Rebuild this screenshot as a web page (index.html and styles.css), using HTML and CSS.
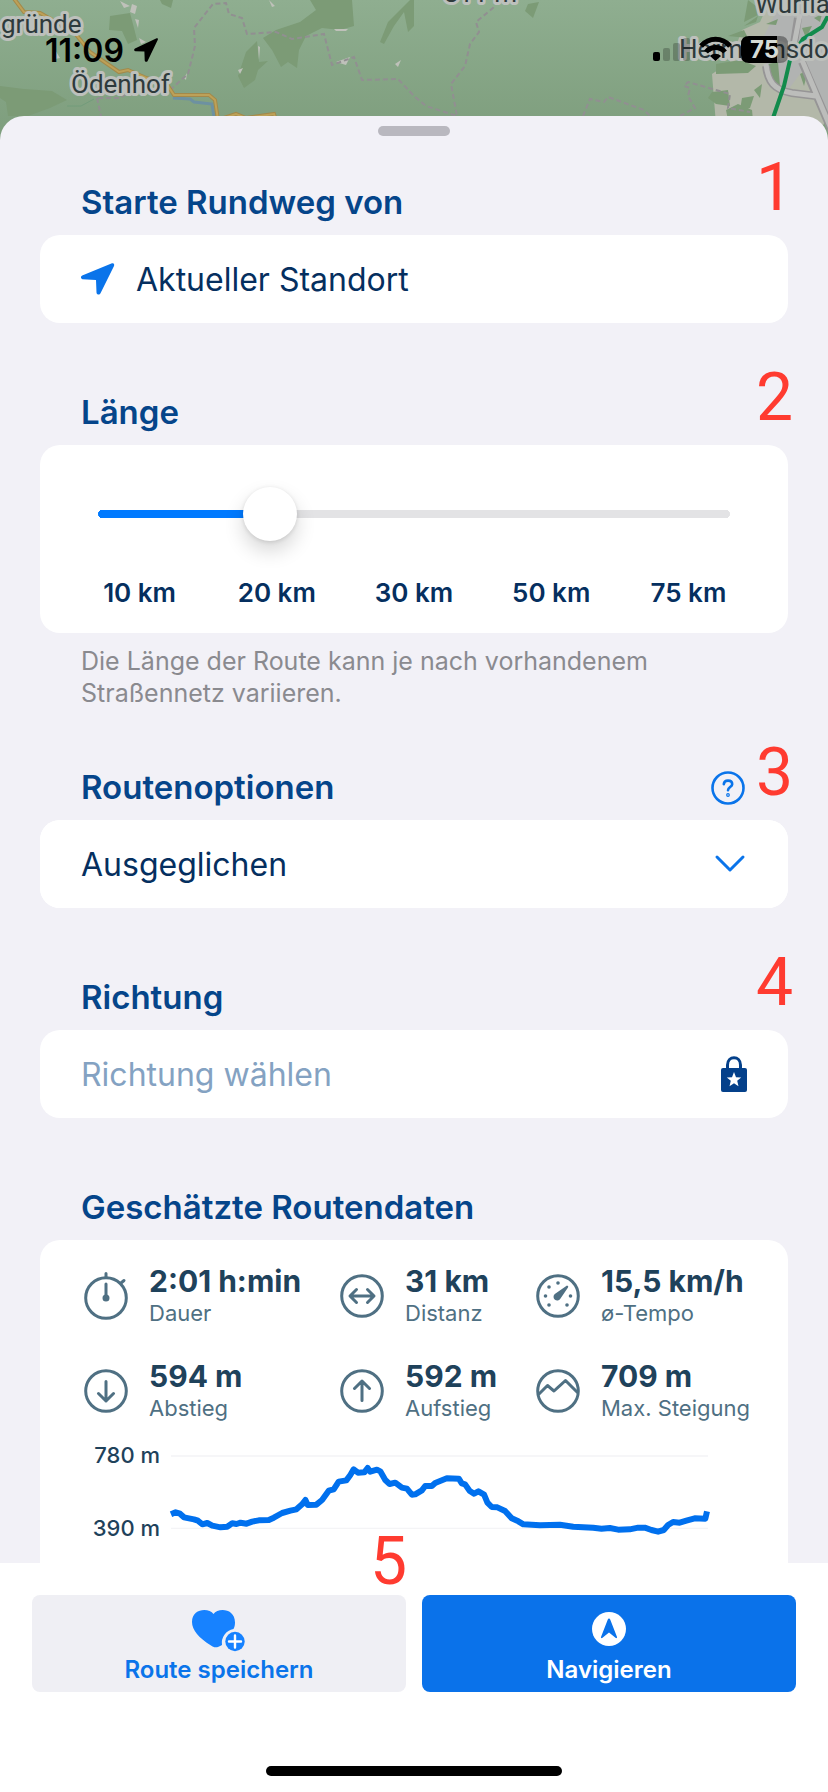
FILE: index.html
```html
<!DOCTYPE html>
<html lang="de">
<head>
<meta charset="utf-8">
<meta name="viewport" content="width=device-width, initial-scale=1">
<title>Rundweg planen</title>
<link rel="stylesheet" href="styles.css">
</head>
<body>
<div class="screen">
  <header class="top">
    <svg class="map" viewBox="0 0 828 150" preserveAspectRatio="xMidYMin slice" aria-hidden="true">
      <defs>
        <linearGradient id="land" x1="0" y1="0" x2="0" y2="1">
          <stop offset="0" stop-color="#8fae90"/>
          <stop offset="1" stop-color="#7c9c7b"/>
        </linearGradient>
      </defs>
      <rect width="828" height="150" fill="url(#land)"/>
      <g fill="#7c9b76">
        <path d="M0 86 24 89 52 91 67 100 50 108 28 116H8L6 102 0 98Z"/>
        <path d="M110 16 130 13 134 28 137 40 128 44 122 31 109 30Z"/>
        <path d="M160 0H173L171 8 162 4Z"/>
        <path d="M310 0H352L354 26 340 30 322 28 306 36 299 50 297 68 288 62 281 67 272 50 263 38 276 30 300 22 316 10Z"/>
        <path d="M246 52 257 41 259 62 268 61 258 70 255 80 244 88 238 76Z"/>
        <path d="M410 0 388 22 380 42 384 44 394 26 404 12 408 32 414 26V0Z"/>
        <path d="M528 4 539 2 533 18 525 11Z"/>
      </g>
      <g fill="#bfc1ba">
        <path d="M120 1 130 6 124 8ZM132 4 137 6 135 14 130 12ZM135 19 139 20 138 28ZM139 38 146 42 141 44ZM269 0 275 6 272 7ZM334 29H348L346 31 336 31ZM336 62 350 57 346 65ZM395 64 401 60 398 67ZM258 46 260 47 259 60ZM184 78 187 73 186 80ZM238 70 243 68 240 74ZM54 48 60 58 55 59Z"/>
      </g>
      <path d="M770 0H828V116L810 150H718L712 74 730 62 742 30 760 22Z" fill="#b3b8a9"/>
      <path d="M780 4 828 0V116L806 66 788 90 768 74 762 40Z" fill="#b1b3b2"/>
      <g fill="#7c9b76">
        <path d="M716 64 740 60 756 66 748 73 716 74ZM712 92 728 90 730 106 716 104 708 98ZM742 98 754 96 750 108 740 110ZM754 90 762 84 760 98ZM744 26 758 16 756 22ZM766 24 778 19 776 25ZM748 0 764 12 744 22ZM768 64 778 62 780 86 770 78ZM800 74 808 70 804 86ZM728 36 744 30 748 38ZM814 18 822 14 820 22ZM802 28 812 26 806 38ZM726 110 738 104 752 110 754 130 730 130Z"/>
      </g>
      <g fill="none" stroke="#969596" stroke-width="8">
        <path d="M798 18 793 50M766 66C768 82 774 90 792 93L816 96M802 62 840 150"/>
      </g>
      <g fill="none" stroke="#bcbdbb" stroke-width="5">
        <path d="M800 14 793 50M766 64C768 82 774 90 792 93L816 96M802 60 840 150"/>
      </g>
      <path d="M828 16 822 27 803 39 790 60 784 86 773 118" fill="none" stroke="#128b4c" stroke-width="4"/>
      <g fill="none" stroke="#918f91" stroke-width="2" stroke-dasharray="5 3">
        <path d="M170 90 188 74 195 46 194 28 213 4 226 3 229 14 242 18 247 34 276 32 292 39 324 34 332 65 354 57 362 80 398 79 414 96 426 106 457 116 451 84 465 66 470 44 479 32 476 22 493 8 496 0"/>
        <path d="M583 116 590 99 604 102 608 97 644 110 650 116M680 116 695 108 688 96 690 88 684 86 688 82 730 94 728 108 750 112M97 98 101 116M98 98 120 98 126 94"/>
      </g>
      <path d="M67 106 81 106 94 99" fill="none" stroke="#739c7b" stroke-width="1"/>
      <path d="M173 98 190 99 194 102 212 104 215 124" fill="none" stroke="#6d91a1" stroke-width="3"/>
      <path d="M12 -4 24 12 40 13 74 32 90 52 119 72 128 70 144 77 168 86 174 95 209 95 215 100 218 120 236 114 246 118 274 114 276 120" fill="none" stroke="#a3894a" stroke-width="4"/>
      <path d="M12 -4 24 12 40 13 74 32 90 52 119 72 128 70 144 77 168 86 174 95 209 95 215 100 218 120 236 114 246 118 274 114 276 120" fill="none" stroke="#bda158" stroke-width="2"/>
      <g class="map-label">
        <text x="1" y="33">gründe</text>
        <text x="71" y="93">Ödenhof</text>
        <text x="444" y="2">811 m</text>
        <text x="755" y="13">Würflach</text>
        <text x="679" y="58">Hermannsdorf</text>
      </g>
    </svg>
    <div class="status">
      <span class="clock">11:09</span>
      <svg class="status-arrow" viewBox="0 0 24 24" aria-label="Ortung aktiv"><path d="M22.600.3 1 10.500C-.4 11.200 0 13.200 1.600 13.300L10.400 13.500 10.700 22.300C10.800 24 13 24.400 13.600 23L23.800 1.700C24.200.7 23.600-.1 22.600.3Z"/></svg>
      <svg class="status-icons" viewBox="0 0 136 28" role="img" aria-label="Mobilfunk, WLAN, Akku 75 Prozent">
        <rect y="16" width="7" height="9" rx="2"/>
        <g opacity=".22"><rect x="10" y="12" width="7" height="13" rx="2"/><rect x="20" y="7" width="7" height="18" rx="2"/><rect x="30" y="2" width="7" height="23" rx="2"/></g>
        <g fill="none" stroke="#000" stroke-width="5"><path d="M48 10C56 1 69 1 77 10M53 16C58 10 67 10 72 16"/></g>
        <path d="M57 20C60 17 65 17 68 20L62.500 25Z"/>
        <path d="M96 0H124V27H96Q88 27 88 19V8Q88 0 96 0Z"/>
        <path d="M124 0H127Q135 0 135 8V19Q135 27 127 27H124Z" opacity=".35"/>
        <text class="battery" x="97" y="22">75</text>
      </svg>
    </div>
  </header>

  <main class="sheet">
    <div class="handle"></div>

    <section class="section">
      <h2 class="title">Starte Rundweg von</h2>
      <span class="mark">1</span>
      <button class="card row" type="button">
        <svg class="locate" viewBox="0 0 34 32" aria-hidden="true"><path d="M31 .3 1.200 12.600C-.6 13.400-.3 16 1.600 16.200L15 17 15.500 29.500C15.600 31.900 18.600 32.400 19.500 30.300L33 3C33.700 1.200 32.600-.3 31 .3Z" fill="#0a74ea"/></svg>
        <span>Aktueller Standort</span>
      </button>
    </section>

    <section class="section">
      <h2 class="title"><label for="length">Länge</label></h2>
      <span class="mark">2</span>
      <div class="card range-card">
        <input class="range" id="length" type="range" min="0" max="4" step="1" value="1">
        <div class="ticks">
          <span>10 km</span><span>20 km</span><span>30 km</span><span>50 km</span><span>75 km</span>
        </div>
      </div>
      <p class="note">Die Länge der Route kann je nach vorhandenem Straßennetz variieren.</p>
    </section>

    <section class="section">
      <div class="title-line">
        <h2 class="title"><label for="options">Routenoptionen</label></h2>
        <button class="help" type="button" aria-label="Hilfe">
          <svg viewBox="0 0 34 34" aria-hidden="true" fill="none" stroke="#0a74ea" stroke-width="2.600" stroke-linecap="round"><circle cx="17" cy="17" r="15.500"/><path d="M12.800 13.200C13 10.700 14.700 9.600 17 9.600 19.400 9.600 21.200 11 21.200 13.200 21.200 16 17 16.200 17 19.300"/><circle cx="17" cy="24" r=".6"/></svg>
        </button>
      </div>
      <span class="mark">3</span>
      <div class="card picker">
        <select class="select" id="options"><option>Ausgeglichen</option></select>
        <svg class="chevron" viewBox="0 0 30 18" aria-hidden="true"><path d="M2 2 15 15 28 2" fill="none" stroke="#0a74ea" stroke-width="3" stroke-linecap="round" stroke-linejoin="round"/></svg>
      </div>
    </section>

    <section class="section">
      <h2 class="title">Richtung</h2>
      <span class="mark">4</span>
      <button class="card row locked" type="button">
        <span>Richtung wählen</span>
        <svg class="lock" viewBox="0 0 26 36" aria-hidden="true"><path d="M6.500 14V9C6.500-.7 19.500-.7 19.500 9V14" fill="none" stroke="#04408a" stroke-width="3"/><rect y="12" width="26" height="24" rx="2" fill="#04408a"/><path d="M13 16 15 21.200 20.200 21.500 16.200 24.800 17.500 30.200 13 27.200 8.500 30.200 9.800 24.800 5.800 21.500 11 21.200Z" fill="#fff"/></svg>
      </button>
    </section>

    <section class="section">
      <h2 class="title">Geschätzte Routendaten</h2>
      <div class="card data">
        <dl class="stats">
          <div class="stat">
            <svg viewBox="0 0 44 48" class="stat-icon tall" aria-hidden="true"><circle cx="22" cy="26" r="20.300"/><path d="M22 5V1.500M37 11 40 8.500M22 12V26"/><circle cx="22" cy="26" r="2" fill="#4f7083"/></svg>
            <div><dd>2:01 h:min</dd><dt>Dauer</dt></div>
          </div>
          <div class="stat">
            <svg viewBox="0 0 44 44" class="stat-icon" aria-hidden="true"><circle cx="22" cy="22" r="20.300"/><path d="M10.500 22H33.500M16.500 15.500 10 22 16.500 28.500M27.500 15.500 34 22 27.500 28.500"/></svg>
            <div><dd>31 km</dd><dt>Distanz</dt></div>
          </div>
          <div class="stat">
            <svg viewBox="0 0 44 44" class="stat-icon" aria-hidden="true"><circle cx="22" cy="22" r="20.300"/><g fill="#4f7083" stroke="none"><circle cx="22" cy="9" r="1.800"/><circle cx="13" cy="13" r="1.800"/><circle cx="9.500" cy="22" r="1.800"/><circle cx="13" cy="31" r="1.800"/><circle cx="31" cy="31" r="1.800"/><circle cx="34.500" cy="22" r="1.800"/><path d="M31 11.500Q33 12 32 13.500L24.500 24.500A3.700 3.700 0 1 1 18.800 20Z"/></g></svg>
            <div><dd>15,5 km/h</dd><dt>ø-Tempo</dt></div>
          </div>
          <div class="stat">
            <svg viewBox="0 0 44 44" class="stat-icon" aria-hidden="true"><circle cx="22" cy="22" r="20.300"/><path d="M22 12.500V32M14.500 24.500 22 32 29.500 24.500"/></svg>
            <div><dd>594 m</dd><dt>Abstieg</dt></div>
          </div>
          <div class="stat">
            <svg viewBox="0 0 44 44" class="stat-icon" aria-hidden="true"><circle cx="22" cy="22" r="20.300"/><path d="M22 31.500V12M14.500 19.500 22 12 29.500 19.500"/></svg>
            <div><dd>592 m</dd><dt>Aufstieg</dt></div>
          </div>
          <div class="stat">
            <svg viewBox="0 0 44 44" class="stat-icon" aria-hidden="true"><circle cx="22" cy="22" r="20.300"/><path d="M3 25 11.500 16.500 18 22 29.500 11.500 41 23"/></svg>
            <div><dd>709 m</dd><dt>Max. Steigung</dt></div>
          </div>
        </dl>
        <div class="chart">
          <div class="axis"><span>780 m</span><span>390 m</span></div>
          <svg class="plot" viewBox="0 0 1614 300" preserveAspectRatio="none" role="img" aria-label="Höhenprofil">
            <path d="M0 48H1614M0 265H1614" stroke="#f4f4f6" stroke-width="4"/>
            <path transform="translate(-331 -60)" fill="none" stroke="#0070ee" stroke-width="18" stroke-linejoin="round" d="M331 283 345 277 358 281 370 292 400 298 412 302 425 313 440 309 455 317 480 322 500 320 515 310 528 312 540 308 558 311 575 305 595 301 625 300 640 293 665 279 690 272 708 268 725 253 735 240 742 255 768 254 785 240 805 212 820 208 835 185 858 181 870 165 880 148 893 158 912 157 922 144 930 155 950 149 960 154 975 180 988 192 1005 188 1025 203 1040 206 1055 224 1065 223 1085 211 1095 198 1115 198 1125 189 1160 175 1196 176 1205 190 1215 193 1228 212 1242 221 1255 214 1272 224 1282 248 1295 261 1312 262 1335 273 1355 295 1375 304 1390 313 1440 316 1500 314 1540 320 1600 323 1625 326 1650 324 1675 329 1710 328 1735 323 1755 323 1775 330 1795 335 1812 330 1825 315 1840 306 1860 308 1880 302 1905 295 1937 296 1942 274"/>
          </svg>
        </div>
      </div>
    </section>
  </main>

  <footer class="actions">
    <span class="mark mark-center">5</span>
    <div class="buttons">
      <button class="action" type="button">
        <svg class="heart" viewBox="0 0 54 42" aria-hidden="true"><path d="M21.500 5C26-1.500 43-1 43 13.500 43 16 42.500 18 41.500 20A14 14 0 0 0 30 36C24 40 21.500 38 19 36.500 7 29 0 21 0 13 0-1 17-1.500 21.500 5Z" fill="#1782ff"/><circle cx="43" cy="32.500" r="9.700" fill="#1782ff"/><path d="M43 26.500V38.500M37 32.500H49" stroke="#fff" stroke-width="2.400" stroke-linecap="round"/></svg>
        <span>Route speichern</span>
      </button>
      <button class="action primary" type="button">
        <svg class="compass" viewBox="0 0 34 34" aria-hidden="true"><circle cx="17" cy="17" r="17" fill="#fff"/><path d="M17 6.500C17.600 6.500 18 7 18.200 7.600L25 25C25.300 26 24.500 26.400 23.800 26L17 20.500 10.200 26C9.500 26.400 8.700 26 9 25L15.800 7.600C16 7 16.400 6.500 17 6.500Z" fill="#0a72ea"/></svg>
        <span>Navigieren</span>
      </button>
    </div>
    <div class="home"></div>
  </footer>
</div>
</body>
</html>
```
FILE: styles.css
```css
* { box-sizing: border-box; }

body {
  margin: 0;
  font-family: Inter, "Liberation Sans", sans-serif;
  color: #052f5f;
  background: #fff;
}

button, select, input { font: inherit; color: inherit; margin: 0; }
button { border: 0; cursor: pointer; text-align: left; }
svg { display: block; flex: none; overflow: visible; }

.screen { display: flex; flex-direction: column; height: 100vh; }

/* Map and status bar */
.top { position: relative; flex: none; height: 116px; }
.map { position: absolute; top: 0; left: 0; width: 100%; height: 150px; overflow: hidden; }
.map-label {
  font: 26px Roboto, sans-serif;
  fill: #2e3a3c;
  stroke: #bdc0bc;
  stroke-width: 6px;
  stroke-linejoin: round;
  paint-order: stroke;
}
.status { position: relative; display: flex; align-items: center; height: 100px; padding: 0 39px 0 45px; }
.clock { font-size: 32px; font-weight: 600; color: #000; }
.status-arrow { width: 24px; height: 24px; margin-left: 10px; }
.status-icons { width: 136px; height: 28px; margin-left: auto; }
.battery { font-size: 24px; font-weight: 700; fill: #d5dbd5; }

/* Sheet */
.sheet {
  position: relative;
  flex: 1;
  min-height: 0;
  overflow-y: auto;
  scrollbar-width: none;
  padding: 10px 40px 0;
  border-radius: 24px 24px 0 0;
  background: #f2f1f7;
}
.handle { width: 72px; height: 10px; margin: 0 auto 46px; border-radius: 5px; background: #b9b8bf; }

.section { position: relative; margin-bottom: 69px; }
.title { margin: 0 0 13px; padding: 0 41px; font-size: 33px; line-height: 40px; font-weight: 600; color: #05458a; }
.title-line { display: flex; justify-content: space-between; align-items: flex-start; padding-right: 43px; }
.help { display: flex; margin-top: 4px; padding: 0; background: none; }
.help svg { width: 34px; height: 34px; }

.mark {
  position: absolute;
  top: -27px;
  right: -5px;
  font: 66px/66px Roboto, Arial, sans-serif;
  color: #ff3b30;
}

.card { width: 100%; border-radius: 20px; background: #fff; }
.row { display: flex; align-items: center; gap: 21px; height: 88px; padding: 0 41px; font-size: 32px; }
.locate { width: 34px; height: 32px; }
.locked { justify-content: space-between; color: #84a2c2; }
.lock { width: 26px; height: 36px; }

.range-card { padding: 42px 31px 22px; }
.range-card .range { width: calc(100% - 54px); margin: 0 27px; }
.range { display: block; height: 54px; appearance: none; background: none; }
.range::-webkit-slider-runnable-track {
  height: 54px;
  border-radius: 27px;
  background:
    radial-gradient(circle at 4px 50%, #007aff 4px, transparent 4px),
    radial-gradient(circle at calc(100% - 4px) 50%, #e3e3e5 4px, transparent 4px),
    linear-gradient(90deg, #007aff 27%, #e3e3e5 27%) center / calc(100% - 8px) 8px no-repeat;
}
.range::-webkit-slider-thumb {
  appearance: none;
  width: 54px;
  height: 54px;
  border-radius: 50%;
  background: #fff;
  box-shadow: 0 10px 20px rgba(0, 0, 0, .16), 0 1px 4px rgba(0, 0, 0, .12);
}
.ticks { display: grid; grid-template-columns: repeat(5, 1fr); margin: 34px 0 0; text-align: center; font-size: 26px; line-height: 36px; font-weight: 600; }
.note { margin: 12px 0 -11px; padding: 0 41px; font-size: 25px; line-height: 32px; color: #8a8a8f; }

.picker { position: relative; height: 88px; }
.select { width: 100%; height: 100%; padding: 0 41px; border: 0; border-radius: 20px; appearance: none; background: #fff; font-size: 32px; }
.chevron { position: absolute; top: 35px; right: 43px; width: 30px; height: 18px; pointer-events: none; }

/* Route data */
.data { padding: 24px 36px 40px 44px; }
.stats { display: grid; grid-template-columns: 256px 196px auto; justify-content: start; row-gap: 31px; margin: 0; }
.stat { display: flex; align-items: center; gap: 21px; white-space: nowrap; }
.stat-icon { width: 44px; height: 44px; fill: none; stroke: #4f7083; stroke-width: 3; stroke-linecap: round; stroke-linejoin: round; }
.tall { height: 48px; }
.stat dd { margin: 0; font-size: 30px; line-height: 34px; font-weight: 700; color: #1f425b; }
.stat dt { font-size: 22px; line-height: 30px; color: #4f7083; }
.stat > div { display: flex; flex-direction: column; }

.chart { display: flex; gap: 11px; margin-top: 17px; padding-right: 44px; }
.axis { display: flex; flex-direction: column; gap: 43px; width: 76px; text-align: right; font-size: 22px; line-height: 30px; font-weight: 500; color: #1f425b; }
.plot { flex: 1; min-width: 0; height: 100px; }

/* Bottom bar */
.actions { position: relative; flex: none; padding: 32px 32px 16px; background: #fff; }
.mark-center { top: -34px; left: 370px; right: auto; }
.buttons { display: grid; grid-template-columns: 1fr 1fr; gap: 16px; }
.action {
  display: flex;
  flex-direction: column;
  align-items: center;
  justify-content: flex-end;
  gap: 4px;
  height: 97px;
  padding: 0 0 7px;
  border-radius: 8px;
  background: #efeff4;
  font-size: 24px;
  line-height: 30px;
  font-weight: 600;
  color: #0a74ea;
}
.heart { width: 54px; height: 42px; }
.compass { width: 34px; height: 34px; margin-bottom: 5px; }
.primary { background: #0a72ea; color: #fff; }
.home { width: 296px; height: 10px; margin: 74px auto 0; border-radius: 5px; background: #000; }
```
